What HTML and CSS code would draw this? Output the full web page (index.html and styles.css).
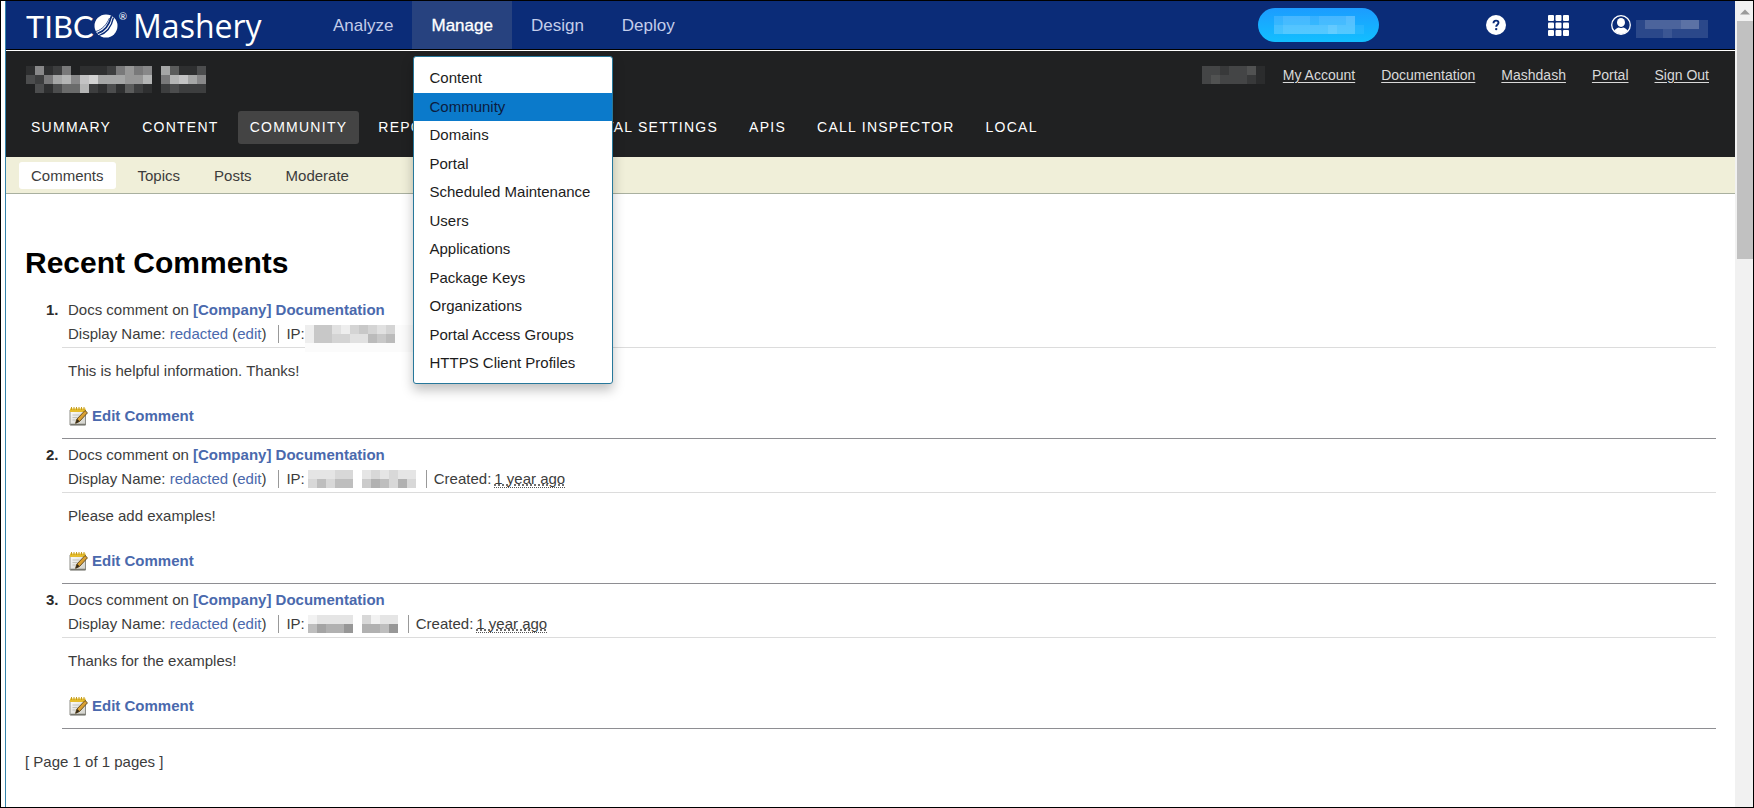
FILE: index.html
```
<!DOCTYPE html>
<html lang="en">
<head>
<meta charset="utf-8">
<title>TIBCO Mashery - Recent Comments</title>
<link rel="stylesheet" href="styles.css">
</head>
<body>
<svg class="defs" aria-hidden="true">
  <defs>
    <linearGradient id="paper" x1="0" y1="0" x2="1" y2="1"><stop offset="0" stop-color="#fff"/><stop offset="1" stop-color="#cfcfc8"/></linearGradient>
    <symbol id="note" viewBox="0 0 19 19">
      <path d="M1 3h15.500v15H1z" fill="url(#paper)" stroke="#8c8c86"/>
      <path d="M1.500 17.500h15" stroke="#77776f" stroke-width="1.500"/>
      <path d="M1 1.500h15.500V5H1z" fill="#e5bd2c"/>
      <path d="M2.500 0v3M5 0v3M7.500 0v3M10 0v3M12.500 0v3M15 0v3" stroke="#c79d1c"/>
      <path d="M3.500 8h7M3.500 10.500h5M3.500 13h3" stroke="#c3c3bd"/>
      <path d="M16 3.500l2.500 2.300-8 8.700-3.800 1.800 1-4z" fill="#d9a032" stroke="#5a431b" stroke-width=".9"/>
      <path d="M8.200 12l2.400 2.300-4.200 2.200z" fill="#33291a"/>
    </symbol>
  </defs>
</svg>
<div class="window">
  <div class="page">
    <header class="topbar">
      <a class="logo" href="#" aria-label="TIBCO Mashery">
        <span>TIBC</span>
        <svg class="orb" viewBox="0 0 24 24" aria-hidden="true">
          <circle cx="12" cy="12" r="11.500" fill="#fff"/>
          <path d="M3.500 19.500C10 17.500 15 12 17.500 2" fill="none" stroke="#0b2c78" stroke-width="1.700"/>
          <path d="M5 21.500C12.500 19 17.500 13 19.500 3.500" fill="none" stroke="#0b2c78" stroke-width="1.300"/>
          <path d="M2 17.500C8 15.500 12.500 11 15.500 4" fill="none" stroke="#0b2c78" stroke-width=".8"/>
        </svg>
        <span class="reg">®</span>
        <span class="product">Mashery</span>
      </a>
      <nav class="mainnav">
        <a href="#">Analyze</a>
        <div class="dropdown">
          <a class="active" href="#">Manage</a>
          <div class="menu">
            <a href="#">Content</a>
            <a class="selected" href="#">Community</a>
            <a href="#">Domains</a>
            <a href="#">Portal</a>
            <a href="#">Scheduled Maintenance</a>
            <a href="#">Users</a>
            <a href="#">Applications</a>
            <a href="#">Package Keys</a>
            <a href="#">Organizations</a>
            <a href="#">Portal Access Groups</a>
            <a href="#">HTTPS Client Profiles</a>
          </div>
        </div>
        <a href="#">Design</a>
        <a href="#">Deploy</a>
      </nav>
      <div class="tools">
        <button class="pill" type="button" aria-label="Area"><svg class="mosaic" data-cells="2333233340 3444445441"></svg></button>
        <a href="#" aria-label="Help"><svg width="20" height="20" viewBox="0 0 20 20"><circle cx="10" cy="10" r="10" fill="#fff"/><path d="M7.500 8.200C7.500 6.400 8.500 5.600 10 5.600s2.500.9 2.500 2.200c0 1.900-2.300 1.900-2.300 3.900" fill="none" stroke="#0b2c78" stroke-width="1.900"/><circle cx="10.200" cy="14.100" r="1.200" fill="#0b2c78"/></svg></a>
        <a href="#" aria-label="Applications"><svg width="21" height="21" viewBox="0 0 21 21" fill="#fff"><rect width="6" height="6" rx="1"/><rect x="7.500" width="6" height="6" rx="1"/><rect x="15" width="6" height="6" rx="1"/><rect y="7.500" width="6" height="6" rx="1"/><rect x="7.500" y="7.500" width="6" height="6" rx="1"/><rect x="15" y="7.500" width="6" height="6" rx="1"/><rect y="15" width="6" height="6" rx="1"/><rect x="7.500" y="15" width="6" height="6" rx="1"/><rect x="15" y="15" width="6" height="6" rx="1"/></svg></a>
        <a class="user" href="#" aria-label="User"><svg width="20" height="20" viewBox="0 0 20 20"><circle cx="10" cy="10" r="9.300" fill="none" stroke="#fff" stroke-width="1.300"/><ellipse cx="10" cy="7.400" rx="4" ry="4.500" fill="#fff"/><path d="M3.200 15.800C4.500 13.400 6.600 12.800 8 12.400q2 1.200 4 0c1.400.4 3.500 1 4.800 3.400A9 9 0 0 1 3.200 15.800z" fill="#fff"/></svg><svg class="mosaic" data-cells="24444552 22232222"></svg></a>
      </div>
    </header>

    <div class="areabar">
      <div class="arearow">
        <svg class="mosaic" data-cells="17126011126867.94113 3269a7bc99988a.6ab97 .31355a2131421.23222"></svg>
        <nav class="account">
          <svg class="mosaic" data-cells="3323341 3433321"></svg>
          <a href="#">My Account</a>
          <a href="#">Documentation</a>
          <a href="#">Mashdash</a>
          <a href="#">Portal</a>
          <a href="#">Sign Out</a>
        </nav>
      </div>
      <nav class="tabs">
        <a href="#">SUMMARY</a>
        <a href="#">CONTENT</a>
        <a class="current" href="#">COMMUNITY</a>
        <a href="#">REPORTS</a>
        <a href="#">USERS</a>
        <a href="#">PORTAL SETTINGS</a>
        <a href="#">APIS</a>
        <a href="#">CALL INSPECTOR</a>
        <a href="#">LOCAL</a>
      </nav>
    </div>

    <nav class="subnav">
      <a class="current" href="#">Comments</a>
      <a href="#">Topics</a>
      <a href="#">Posts</a>
      <a href="#">Moderate</a>
    </nav>

    <main>
      <h1>Recent Comments</h1>
      <ol class="comments">
        <li>
          <span class="num">1.</span>
          <article>
            <div class="head">
              <div>Docs comment on <a class="doc" href="#">[Company] Documentation</a></div>
              <div class="meta"><span>Display Name: <a href="#">redacted</a> (<a href="#">edit</a>)</span><span class="field">IP:<svg class="mosaic tall" data-cells="144213432300 144332254500 000000000000"></svg></span><span class="field">Created: <abbr title="1 year ago">1 year ago</abbr></span></div>
            </div>
            <p>This is helpful information. Thanks!</p>
            <a class="edit" href="#"><svg width="19" height="19"><use href="#note"/></svg>Edit Comment</a>
          </article>
        </li>
        <li>
          <span class="num">2.</span>
          <article>
            <div class="head">
              <div>Docs comment on <a class="doc" href="#">[Company] Documentation</a></div>
              <div class="meta"><span>Display Name: <a href="#">redacted</a> (<a href="#">edit</a>)</span><span class="field">IP:<svg class="mosaic" data-cells="22233.232322 35355.465363"></svg></span><span class="field">Created: <abbr title="1 year ago">1 year ago</abbr></span></div>
            </div>
            <p>Please add examples!</p>
            <a class="edit" href="#"><svg width="19" height="19"><use href="#note"/></svg>Edit Comment</a>
          </article>
        </li>
        <li>
          <span class="num">3.</span>
          <article>
            <div class="head">
              <div>Docs comment on <a class="doc" href="#">[Company] Documentation</a></div>
              <div class="meta"><span>Display Name: <a href="#">redacted</a> (<a href="#">edit</a>)</span><span class="field">IP:<svg class="mosaic" data-cells="12222.3122 57668.6658"></svg></span><span class="field">Created: <abbr title="1 year ago">1 year ago</abbr></span></div>
            </div>
            <p>Thanks for the examples!</p>
            <a class="edit" href="#"><svg width="19" height="19"><use href="#note"/></svg>Edit Comment</a>
          </article>
        </li>
      </ol>
      <div class="pager">[ Page 1 of 1 pages ]</div>
    </main>
  </div>
  <div class="scrollbar" aria-hidden="true">
    <svg width="16" height="20" viewBox="0 0 16 20"><path d="M3 13.500L8 8.500l5 5z" fill="#9a9a9a"/></svg>
    <div class="thumb"></div>
  </div>
</div>
<script src="mosaic.js"></script>
</body>
</html>
```
FILE: styles.css
```
* { box-sizing: border-box; }

body {
  margin: 0;
  background: #fff;
  color: #3c3c3c;
  font: 15px/24px "Liberation Sans", Arial, sans-serif;
}

a { color: inherit; text-decoration: none; }
svg { display: block; flex: none; }
.defs { position: absolute; width: 0; height: 0; }

.window {
  display: flex;
  min-height: 100vh;
  padding-left: 4px;
  border: 1px solid #000;
}

.page {
  flex: 1;
  min-width: 0;
  border-left: 1px solid #3484ab;
}

/* Blue product bar */
.topbar {
  display: flex;
  height: 50px;
  padding: 0 27px 0 20px;
  background: #0b2c78;
  border-bottom: 1px solid #fff;
  box-shadow: inset 0 -1px #000;
}

.logo {
  display: flex;
  align-items: center;
  flex: 0 0 288px;
  color: #fff;
  font: 31px/48px Lato, sans-serif;
}

.orb { width: 24px; height: 24px; }
.reg { align-self: flex-start; margin: 8px 6px 0 1px; font-size: 10px; line-height: 14px; }
.product { font-family: "Open Sans", sans-serif; font-size: 32px; }

.mainnav { display: flex; flex: 1; }

.mainnav > a,
.dropdown > a {
  display: block;
  height: 48px;
  padding: 0 19px;
  color: #c3cdea;
  font-size: 17px;
  line-height: 50px;
}

.dropdown { position: relative; }
.dropdown > .active { background: #27427f; color: #fff; -webkit-text-stroke: 0.3px #fff; }

.menu {
  position: absolute;
  z-index: 10;
  top: 55px;
  left: 1px;
  padding: 7px 0 5px;
  background: #fff;
  border: 1px solid #27789b;
  border-radius: 3px;
  box-shadow: 0 6px 12px rgba(0, 0, 0, 0.25);
  white-space: nowrap;
}

.menu a {
  display: block;
  padding: 0 22px 0 15px;
  color: #1c1c1c;
  line-height: 1.9;
}

.menu .selected { background: #0b7acb; color: #0c1c40; }

.tools { display: flex; align-items: center; gap: 42px; height: 48px; }

.pill {
  display: flex;
  align-items: center;
  justify-content: center;
  width: 121px;
  height: 34px;
  margin-right: 65px;
  padding: 0;
  border: 0;
  border-radius: 17px;
  background: linear-gradient(#1c9cff, #12bfff);
  color: #fff;
}

.user { display: flex; align-items: center; gap: 5px; color: #fff; }
.user .mosaic { margin-top: 8px; }

/* Dark area bar */
.areabar { padding: 15px 26px 13px 13px; background: #202122; color: #fff; }
.arearow { display: flex; justify-content: space-between; padding-left: 7px; }
.account { display: flex; gap: 26px; height: 18px; color: #d9d9d9; font-size: 14px; line-height: 18px; }
.account a { text-decoration: underline; text-underline-offset: 2px; }
.account .mosaic { margin-right: -8px; }

.tabs { display: flex; gap: 7px; margin-top: 18px; }

.tabs a {
  padding: 0 12px;
  border-radius: 3px;
  font-size: 14px;
  line-height: 33px;
  letter-spacing: 0.09em;
}

.tabs .current { background: #444; }

.subnav {
  display: flex;
  gap: 10px;
  padding: 5px 13px 4px;
  background: #f0efd9;
  border-bottom: 1px solid #a9b09f;
}

.subnav a { padding: 0 12px; border-radius: 3px; line-height: 27px; }
.subnav .current { background: #fff; }

/* Comment list */
main { padding: 51px 19px 24px; }
h1 { margin: 0 0 13px; color: #000; font-size: 30px; line-height: 36px; }

.comments { margin: 0; padding: 0 0 0 21px; list-style: none; }
.comments li { display: flex; }
.num { flex: 0 0 16px; padding-top: 4px; color: #2b2b2b; font-weight: bold; }
article { flex: 1; border-bottom: 1px solid #8e8e92; }
.head { padding: 4px 6px 1px; border-bottom: 1px solid #dcdcdc; }
.comments a { color: #4a69ad; }
.comments .doc, .comments .edit { font-weight: bold; }

.meta { display: flex; align-items: center; gap: 12px; height: 24px; }
.field { display: flex; height: 18px; padding-left: 7px; border-left: 1px solid #999; line-height: 18px; gap: 3px; }
.field + .field { margin-left: -2px; }
.tall { position: relative; margin-left: -3px; background: #fbfbfb; }
abbr { border-bottom: 1px dotted #555; height: 18px; }

.comments p { margin: 11px 6px 21px; }
.edit { display: flex; align-items: center; gap: 4px; width: max-content; margin: 0 7px 10px; }

.pager { margin-top: 21px; }

/* Scroll track */
.scrollbar { flex: 0 0 18px; padding-left: 2px; background: #f1f1f1; }
.thumb { height: 238px; background: #c1c1c1; }
```
FILE: mosaic.js
```
// Draws each masked value as 9px blocks; every hex digit is one block's strength.
document.querySelectorAll('.mosaic').forEach(function (svg) {
  var size = 9;
  var rows = svg.dataset.cells.split(' ');
  svg.setAttribute('width', rows[0].length * size);
  svg.setAttribute('height', rows.length * size);
  rows.forEach(function (row, y) {
    row.split('').forEach(function (cell, x) {
      if (cell === '.') return;
      var rect = document.createElementNS('http://www.w3.org/2000/svg', 'rect');
      rect.setAttribute('x', x * size);
      rect.setAttribute('y', y * size);
      rect.setAttribute('width', size);
      rect.setAttribute('height', size);
      rect.setAttribute('fill', 'currentColor');
      rect.setAttribute('fill-opacity', parseInt(cell, 16) / 15);
      svg.appendChild(rect);
    });
  });
});
```
